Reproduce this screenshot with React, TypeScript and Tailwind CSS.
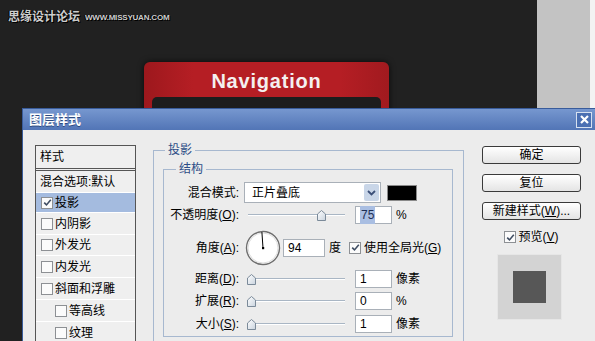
import React from 'react';

const font = "font-['Liberation_Sans','Noto_Sans_CJK_SC',sans-serif]";

function Box({ on, size = 'w-[12px] h-[12px]' }: { on?: boolean; size?: string }) {
  return (
    <span className={`${size} shrink-0 border border-[#8d9094] bg-[#fbfbfb] flex items-center justify-center`}>
      {on && (
        <svg width="9" height="9" viewBox="0 0 9 9">
          <path d="M1.2 4.6 L3.5 6.9 L7.8 1.8" stroke="#3f4d63" strokeWidth="1.6" fill="none" />
        </svg>
      )}
    </span>
  );
}

function Thumb() {
  return (
    <svg width="9" height="11" viewBox="0 0 9 11" className="shrink-0">
      <defs>
        <linearGradient id="thumbfill" x1="0" y1="0" x2="1" y2="1">
          <stop offset="0" stopColor="#ffffff" />
          <stop offset="1" stopColor="#c9d3de" />
        </linearGradient>
      </defs>
      <path d="M0.5 4 L4.5 0.5 L8.5 4 V10.5 H0.5 Z" fill="url(#thumbfill)" stroke="#7b8a99" />
    </svg>
  );
}

function Slider({ left, right }: { left: string; right: string }) {
  return (
    <div className="flex items-center">
      <div className={`${left} h-[2px] bg-[#a9b6c4] border-b border-white`} />
      <Thumb />
      <div className={`${right} h-[2px] bg-[#a9b6c4] border-b border-white`} />
    </div>
  );
}

function Field({ value, w = 'w-[37px]', sel }: { value: string; w?: string; sel?: boolean }) {
  return (
    <div className={`${w} h-[18px] shrink-0 bg-white border border-[#a9b0b8] pl-[4px] flex items-center text-[12px]`}>
      <span className={sel ? 'bg-[#a9bee2] text-[#1d2e55] px-[1px]' : ''}>{value}</span>
    </div>
  );
}

function Label({ children }: { children: React.ReactNode }) {
  return <div className="w-[76px] shrink-0 text-right whitespace-nowrap text-[12px] pr-[1px]">{children}</div>;
}

function U({ c }: { c: string }) {
  return <span className="underline">{c}</span>;
}

const listItems = [
  { text: '混合选项:默认', box: false, on: false, indent: false, sel: false, h: 'h-[21px]' },
  { text: '投影', box: true, on: true, indent: false, sel: true, h: 'h-[19px]' },
  { text: '内阴影', box: true, on: false, indent: false, sel: false, h: 'h-[21px]' },
  { text: '外发光', box: true, on: false, indent: false, sel: false, h: 'h-[20px]' },
  { text: '内发光', box: true, on: false, indent: false, sel: false, h: 'h-[21px]' },
  { text: '斜面和浮雕', box: true, on: false, indent: false, sel: false, h: 'h-[21px]' },
  { text: '等高线', box: true, on: false, indent: true, sel: false, h: 'h-[21px]' },
  { text: '纹理', box: true, on: false, indent: true, sel: false, h: 'h-[21px]' },
];

function Button({ children }: { children: React.ReactNode }) {
  return (
    <div className="w-[99px] h-[18px] rounded-[3px] border border-[#3a3a3a] bg-[linear-gradient(180deg,#ffffff,#e4e4e4)] flex items-center justify-center text-[12px] text-black">
      {children}
    </div>
  );
}

export default function App() {
  return (
    <div className={`${font} relative w-[595px] h-[341px] overflow-hidden flex`}>
      {/* background canvas */}
      <div className="w-[537px] h-full bg-[#212121] flex flex-col">
        <div className="mt-[11px] ml-[8px] h-[12px] flex items-end gap-[5px] text-[#cdcdcd] font-bold [text-shadow:1px_1px_0_#000,-1px_0_0_#000]">
          <span className="text-[12px] leading-[12px] tracking-[0px]">思缘设计论坛</span>
          <span className="text-[8px] leading-[10px] tracking-[-0.2px]">WWW.MISSYUAN.COM</span>
        </div>
        <div className="ml-[144px] mt-[39px] w-[245px] h-[70px] rounded-t-[6px] bg-[linear-gradient(90deg,#9d181d,#b51e24_20%,#b51e24_80%,#a11a1f)] shadow-[0_0_6px_rgba(0,0,0,0.7)] flex flex-col items-center pt-[7px]">
          <div className="h-[24px] leading-[24px] text-[20px] font-bold tracking-[0.8px] text-[#f4f0f0]">Navigation</div>
          <div className="mt-[4px] w-[229px] flex-1 rounded-t-[5px] bg-[#1d1d1d]" />
        </div>
      </div>
      <div className="w-[53px] h-full bg-[#c3c3c3]" />
      <div className="flex-1 h-full bg-[#f3f3f3]" />

      {/* dialog window */}
      <div className="absolute left-[22px] top-[108px] w-[574px] h-[240px] border border-[#395c9b] bg-[#ececec] flex flex-col">
        <div className="h-[21px] shrink-0 bg-[linear-gradient(180deg,#7697cf,#5275b6)] flex items-center justify-between pl-[6px] pr-[3px]">
          <span className="text-[13px] font-bold text-white [text-shadow:0_1px_0_#2c4a80]">图层样式</span>
          <div className="w-[16px] h-[16px] border border-[#d7e1f0] bg-[#4b70b3] flex items-center justify-center">
            <svg width="9" height="9" viewBox="0 0 9 9">
              <path d="M1 1 L8 8 M8 1 L1 8" stroke="#fff" strokeWidth="2.2" />
            </svg>
          </div>
        </div>

        <div className="flex items-start pl-[12px] text-black">
          {/* style list */}
          <div className="mt-[15px] w-[101px] border border-[#555] bg-[#efefef] text-[12px]">
            <div className="h-[25px] pl-[4px] flex items-center border-b-[3px] border-double border-[#555]">样式</div>
            {listItems.map((it) => (
              <div
                key={it.text}
                className={`${it.h} box-content border-b border-white flex items-center gap-[2px] ${it.sel ? 'bg-[#a4bbdf]' : ''} ${it.indent ? 'pl-[19px]' : it.box ? 'pl-[5px]' : 'pl-[4px]'}`}
              >
                {it.box && <Box on={it.on} />}
                <span>{it.text}</span>
              </div>
            ))}
          </div>

          {/* main settings */}
          <fieldset className="ml-[17px] mt-[13px] w-[311px] border border-[#a7b8cf] pb-[20px]">
            <legend className="ml-[11px] px-[3px] text-[12px] leading-[14px] text-[#2d4d86]">投影</legend>
            <fieldset className="ml-[9px] mr-[10px] mt-[5px] border border-[#a7b8cf] pb-[3px]">
              <legend className="ml-[12px] px-[3px] text-[12px] leading-[14px] text-[#2d4d86]">结构</legend>

              <div className="mt-[6px] h-[21px] flex items-center text-[12px]">
                <Label>混合模式:</Label>
                <div className="ml-[4px] w-[137px] h-[21px] bg-white border border-[#a9b0b8] flex items-center">
                  <span className="flex-1 pl-[7px]">正片叠底</span>
                  <div className="w-[15px] h-[17px] mr-[1px] rounded-[2px] bg-[#c9d6e8] flex items-center justify-center">
                    <svg width="9" height="6" viewBox="0 0 9 6">
                      <path d="M1 1 L4.5 4.5 L8 1" stroke="#3b4f78" strokeWidth="1.8" fill="none" />
                    </svg>
                  </div>
                </div>
                <div className="ml-[6px] w-[30px] h-[16px] bg-black border border-[#8a8a8a]" />
              </div>

              <div className="mt-[3px] h-[18px] flex items-center text-[12px]">
                <Label>
                  不透明度(<U c="O" />):
                </Label>
                <div className="ml-[8px]">
                  <Slider left="w-[69px]" right="w-[19px]" />
                </div>
                <div className="ml-[10px]">
                  <Field value="75" sel />
                </div>
                <span className="ml-[4px]">%</span>
              </div>

              <div className="mt-[6px] h-[35px] flex items-center text-[12px]">
                <Label>
                  角度(<U c="A" />):
                </Label>
                <svg width="36" height="36" viewBox="0 0 36 36" className="ml-[5px] shrink-0">
                  <circle cx="18" cy="18" r="16.5" fill="#ffffff" stroke="#6e6e6e" strokeWidth="1.4" />
                  <circle cx="18" cy="18" r="15" fill="none" stroke="#dedede" strokeWidth="1" />
                  <path d="M18 18 L16.9 2" stroke="#000" strokeWidth="1" />
                  <rect x="17" y="17" width="2.2" height="2.2" fill="#000" />
                </svg>
                <div className="ml-[2px]">
                  <Field value="94" w="w-[42px]" />
                </div>
                <span className="ml-[4px]">度</span>
                <div className="ml-[8px] flex items-center gap-[3px]">
                  <Box on />
                  <span>
                    使用全局光(<U c="G" />)
                  </span>
                </div>
              </div>

              {[
                { l: '距离', k: 'D', v: '1', u: '像素' },
                { l: '扩展', k: 'R', v: '0', u: '%' },
                { l: '大小', k: 'S', v: '1', u: '像素' },
              ].map((r, i) => (
                <div key={r.l} className={`${i === 0 ? 'mt-[5px]' : i === 1 ? 'mt-[4px]' : 'mt-[5px]'} h-[18px] flex items-center text-[12px]`}>
                  <Label>
                    {r.l}(<U c={r.k} />):
                  </Label>
                  <div className="ml-[7px]">
                    <Slider left="w-0" right="w-[89px]" />
                  </div>
                  <div className="ml-[10px]">
                    <Field value={r.v} />
                  </div>
                  <span className="ml-[4px]">{r.u}</span>
                </div>
              ))}
            </fieldset>
          </fieldset>

          {/* buttons */}
          <div className="ml-[18px] mt-[16px] flex flex-col items-center gap-[10px]">
            <Button>确定</Button>
            <Button>复位</Button>
            <Button>
              新建样式(<U c="W" />)...
            </Button>
            <div className="-mt-[2px] flex items-center gap-[2px] text-[12px]">
              <Box on />
              <span>
                预览(<U c="V" />)
              </span>
            </div>
            <div className="-mt-[2px] -ml-[4px] w-[65px] h-[66px] border border-[#e6e6e6] bg-[#d3d3d3] flex items-center justify-center">
              <div className="w-[33px] h-[32px] bg-[#575757]" />
            </div>
          </div>
        </div>
      </div>
    </div>
  );
}
